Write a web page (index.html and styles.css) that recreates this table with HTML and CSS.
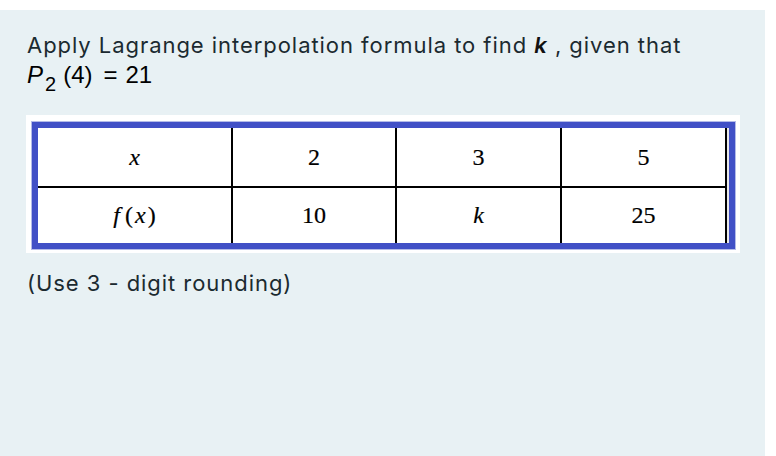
FILE: index.html
```html
<!DOCTYPE html>
<html>
<head>
<meta charset="utf-8">
<link rel="stylesheet" href="styles.css">
</head>
<body>
<div class="topstrip"></div>
<main class="panel">
  <p class="question">Apply Lagrange interpolation formula to find <i class="var">k</i> , given that</p>
  <p class="formula"><i class="p">P</i><sub>2</sub><span class="arg">(4)</span><span class="eq">=</span>21</p>
  <div class="figure">
    <div class="frame">
      <div class="inner">
        <div class="grid">
          <div class="cell"><i>x</i></div>
          <div class="cell">2</div>
          <div class="cell">3</div>
          <div class="cell">5</div>
          <div class="cell"><i class="fn">f</i>(<i class="fx">x</i>)</div>
          <div class="cell">10</div>
          <div class="cell"><i>k</i></div>
          <div class="cell">25</div>
        </div>
      </div>
    </div>
  </div>
  <p class="note">(Use 3 - digit rounding)</p>
</main>
</body>
</html>
```
FILE: styles.css
```css
html, body {
  margin: 0;
  padding: 0;
  background: #ffffff;
}
.topstrip {
  height: 10px;
}
.panel {
  width: 765px;
  height: 446px;
  background: #e8f1f4;
  box-sizing: border-box;
  padding: 22px 0 0 27px;
  font-family: Inter, "Noto Sans", sans-serif;
  color: #1b2a30;
}
.question {
  margin: 0;
  font-size: 22px;
  line-height: 26px;
  letter-spacing: 0.95px;
}
.question .var {
  font-weight: 600;
  color: #111;
}
.formula {
  margin: 2px 0 0 0;
  font-family: "Liberation Sans", Arial, sans-serif;
  font-size: 24px;
  line-height: 30px;
  color: #000;
}
.formula .p {
  margin-right: 2px;
}
.formula sub {
  font-size: 20px;
  vertical-align: -8px;
  line-height: 0;
}
.formula .arg {
  margin-left: 7px;
}
.formula .eq {
  margin: 0 8px 0 11px;
}
.figure {
  margin: 25px 0 0 -1px;
  width: 714px;
  height: 138px;
  box-sizing: border-box;
  background: #ffffff;
  padding: 7px 5px 4px 6px;
}
.frame {
  border: 6px solid #4150c6;
  box-shadow: 0 0 0 1px #b4bbe8;
}
.inner {
  background: #e9e9e9;
  padding-right: 2px;
}
.grid {
  display: grid;
  grid-template-columns: 193px 162px 163px 163px;
  grid-template-rows: 58px 55px;
  gap: 2px;
  background: #000;
  border-right: 2px solid #000;
}
.cell {
  background: #fff;
  display: flex;
  align-items: center;
  justify-content: center;
  font-family: "Liberation Serif", "Times New Roman", serif;
  font-size: 24px;
  color: #000;
  -webkit-text-stroke: 0.2px #000;
}
.cell .fn {
  margin-right: 5px;
}
.cell .fx {
  margin: 0 2px;
}
.note {
  margin: 17px 0 0 0;
  font-size: 22px;
  line-height: 26px;
  letter-spacing: 0.95px;
}
```
